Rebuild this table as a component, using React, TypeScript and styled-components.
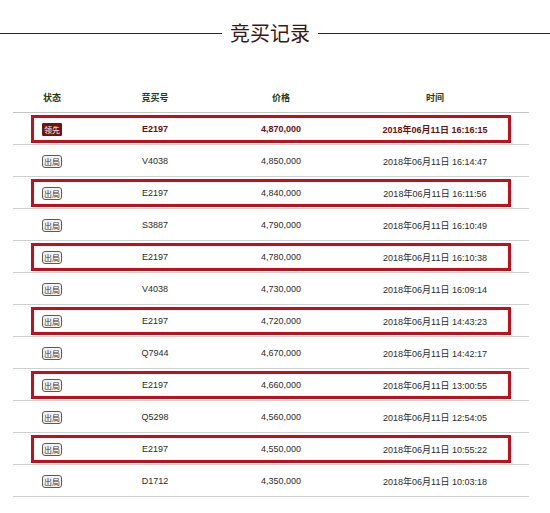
import React from "react";
import styled, { createGlobalStyle } from "styled-components";

const Global = createGlobalStyle`
  html, body { margin: 0; padding: 0; background: #fff; }
  body { font-family: "Liberation Sans", "Noto Sans CJK SC", sans-serif; }
`;

const Page = styled.div`
  width: 550px;
  padding-top: 20px;
`;

const TitleRow = styled.div`
  display: grid;
  grid-template-columns: 222px auto 1fr;
  align-items: center;
  column-gap: 8px;
  height: 26px;
`;

const Rule = styled.div`
  height: 1px;
  background: #2a2a2a;
`;

const Title = styled.h2`
  margin: 0;
  font-family: "Noto Sans CJK SC", sans-serif;
  font-weight: 400;
  font-size: 20px;
  line-height: 26px;
  color: #3a1818;
`;

const Table = styled.div`
  margin: 36px 21px 0 13px;
  width: 516px;
`;

const Row = styled.div<{ $header?: boolean }>`
  padding: ${(p) => (p.$header ? "0 21px" : "2px 21px 1px")};
  border-bottom: 1px solid ${(p) => (p.$header ? "#c4c4c4" : "#d0d0d0")};
`;

const Cells = styled.div<{ $boxed?: boolean; $header?: boolean }>`
  display: grid;
  grid-template-columns: 36px 78px 82px 134px;
  column-gap: 46px;
  align-items: center;
  justify-items: center;
  box-sizing: border-box;
  height: ${(p) => (p.$header ? "30px" : "28px")};
  border: 3px solid ${(p) => (p.$boxed ? "#c2101b" : "transparent")};
  margin: 0 -3px;
  font-size: 9px;
  white-space: nowrap;
`;

const Cell = styled.div<{ $tone: "head" | "lead" | "plain" }>`
  font-weight: ${(p) => (p.$tone === "plain" ? 400 : 700)};
  color: ${(p) =>
    p.$tone === "head" ? "#1d3b17" : p.$tone === "lead" ? "#6a1010" : "#2b2b2b"};
`;

const Badge = styled.span<{ $lead?: boolean }>`
  display: inline-block;
  box-sizing: border-box;
  height: 13px;
  line-height: 11px;
  padding: 0 1px;
  font-size: 8px;
  font-family: "Noto Sans CJK SC", sans-serif;
  border-radius: ${(p) => (p.$lead ? "1px" : "3px")};
  border: 1px solid ${(p) => (p.$lead ? "#6a1414" : "#5a5a5a")};
  background: ${(p) => (p.$lead ? "#6a1414" : "#f4f4f4")};
  color: ${(p) => (p.$lead ? "#fff" : "#333")};
`;

type Bid = { code: string; price: string; time: string };

const bids: Bid[] = [
  { code: "E2197", price: "4,870,000", time: "16:16:15" },
  { code: "V4038", price: "4,850,000", time: "16:14:47" },
  { code: "E2197", price: "4,840,000", time: "16:11:56" },
  { code: "S3887", price: "4,790,000", time: "16:10:49" },
  { code: "E2197", price: "4,780,000", time: "16:10:38" },
  { code: "V4038", price: "4,730,000", time: "16:09:14" },
  { code: "E2197", price: "4,720,000", time: "14:43:23" },
  { code: "Q7944", price: "4,670,000", time: "14:42:17" },
  { code: "E2197", price: "4,660,000", time: "13:00:55" },
  { code: "Q5298", price: "4,560,000", time: "12:54:05" },
  { code: "E2197", price: "4,550,000", time: "10:55:22" },
  { code: "D1712", price: "4,350,000", time: "10:03:18" },
];

export default function App() {
  return (
    <Page>
      <Global />
      <TitleRow>
        <Rule />
        <Title>竞买记录</Title>
        <Rule />
      </TitleRow>
      <Table>
        <Row $header>
          <Cells $header>
            <Cell $tone="head">状态</Cell>
            <Cell $tone="head">竞买号</Cell>
            <Cell $tone="head">价格</Cell>
            <Cell $tone="head">时间</Cell>
          </Cells>
        </Row>
        {bids.map((b, i) => {
          const lead = i === 0;
          const tone = lead ? "lead" : "plain";
          return (
            <Row key={i}>
              <Cells $boxed={b.code === "E2197"}>
                <Cell $tone="plain">
                  <Badge $lead={lead}>{lead ? "领先" : "出局"}</Badge>
                </Cell>
                <Cell $tone={tone}>{b.code}</Cell>
                <Cell $tone={tone}>{b.price}</Cell>
                <Cell $tone={tone}>2018年06月11日 {b.time}</Cell>
              </Cells>
            </Row>
          );
        })}
      </Table>
    </Page>
  );
}
